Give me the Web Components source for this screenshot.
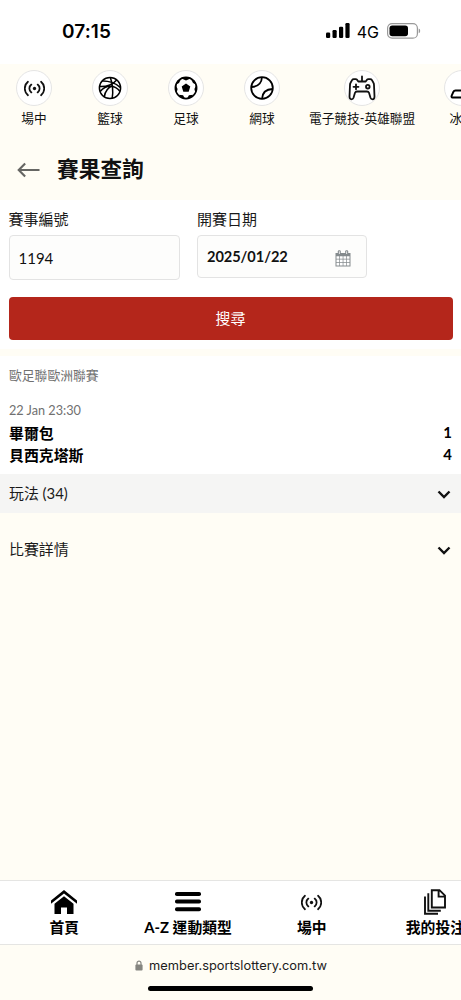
<!DOCTYPE html>
<html lang="zh-Hant">
<head>
<meta charset="utf-8">
<meta name="viewport" content="width=device-width">
<title>賽果查詢</title>
<style>
html,body{margin:0;height:100%;overflow:hidden;background:#fffdf5}
body{font-family:Lato,"Noto Sans CJK TC",sans-serif;color:#1a1a1a}
</style>
</head>
<body>
<results-page></results-page>
<script>
const define = (name, html) => customElements.define(name, class extends HTMLElement {
  constructor() {
    super();
    const t = document.createElement('template');
    t.innerHTML = html;
    this.attachShadow({ mode: 'open' }).append(t.content.cloneNode(true));
  }
});

const ICONS = {
  live: ['0 0 24 24', '<g fill="none" stroke="#111" stroke-width="2" stroke-linecap="round"><path d="M8.400 7.500a5.600 5.600 0 0 0 0 9M15.600 7.500a5.600 5.600 0 0 1 0 9M4.500 4.300a10 10 0 0 0 0 15.400M19.500 4.300a10 10 0 0 1 0 15.400"/></g><circle cx="12" cy="12" r="1.900" fill="#111"/>'],
  basketball: ['0 0 24 24', '<g fill="none" stroke="#000" stroke-width="1.5"><circle cx="12" cy="12" r="10.600"/><path d="M12.300 1.500C14.800 8 15.300 15 14.200 22.300M4 5C10 4.600 18 7 22.200 11.500M1.600 10.600C8 10.800 15 8.300 18.700 4M2.200 15.500C8 8.500 17 8.500 22 15.500M6.300 20.800C7 15.500 10 11.500 14.800 9.500"/></g>'],
  football: ['0 0 24 24', '<circle cx="12" cy="12" r="10.600" fill="none" stroke="#000" stroke-width="1.700"/><path d="M12 7.600l4.300 3-1.600 5.100H9.300l-1.600-5.100zM7 2.200l5 2.400 5-2.400-3-1.200h-4zM1.400 8.500l2.200 4.500-.9 3.500L.9 14zM22.600 8.500l-2.200 4.500.9 3.500L23.100 14zM2 8.500L5 6.900 7 3 3.500 4.600zM22 8.500L19 6.900 17 3l3.500 1.600zM4.800 18.800l4.300.5 2 3.700L7.500 22zM19.200 18.800l-4.300.5-2 3.700L16.500 22z" fill="#000"/>'],
  tennis: ['0 0 24 24', '<g fill="none" stroke="#000" stroke-width="1.800"><circle cx="12" cy="12" r="10.800"/><path d="M1.500 11C7.500 10.800 11.500 7.300 12 1.300M12 22.700C12.500 16.700 16.500 13.200 22.500 13"/></g>'],
  gamepad: ['0 0 28 26', '<g fill="none" stroke="#111" stroke-width="1.800" stroke-linecap="round" stroke-linejoin="round"><path d="M14 1.500v4.800M10.300 6.500h7.400l1.300-1.800q.5-.6 1.300-.6h2q1 0 1.500.8l1.500 2.600q.7 1 .7 2.500l.5 11.500q0 2.800-2 2.800-1.500 0-2-1.500L21 17.800q-.5-1.300-2-1.300H9q-1.500 0-2 1.300l-1.500 5Q5 24.300 3.500 24.300q-2 0-2-2.800L2 10q0-1.500.7-2.500l1.500-2.600q.5-.8 1.500-.8h2q.8 0 1.300.6z"/><path d="M8 9.300v5M5.500 11.800h5"/><circle cx="19.800" cy="11.700" r="1.800"/></g>'],
  hockey: ['0 0 24 24', '<path d="M8 14.500h20v7H2.500c-1 0-1.200-1-.8-2l1.600-3.500q.7-1.500 2.200-1.500z" fill="none" stroke="#000" stroke-width="1.900"/>'],
  back: ['0 0 24 16', '<path d="M23.500 8H2M8.500 1.200L1.800 8l6.700 6.800" fill="none" stroke="#666663" stroke-width="2.200"/>'],
  calendar: ['0 0 16 17', '<g fill="#858b8e"><path d="M.5 3h15v13.500H.5z"/><rect x="2.800" y=".2" width="3" height="4.800" rx="1.200"/><rect x="10.200" y=".2" width="3" height="4.800" rx="1.200"/></g><path d="M1.500 6.300h2.800v2.500H1.500zm3.500 0h2.700v2.500H5zm3.400 0h2.700v2.500H8.400zm3.400 0h2.700v2.500h-2.700zM1.500 9.500h2.800V12H1.500zm3.500 0h2.700V12H5zm3.400 0h2.700V12H8.400zm3.400 0h2.700V12h-2.700zM1.500 12.800h2.800v2.700H1.500zm3.500 0h2.700v2.700H5zm3.400 0h2.700v2.700H8.400zm3.400 0h2.700v2.700h-2.700zM3.900 1.300h.8v2.600h-.8zm7.400 0h.8v2.600h-.8z" fill="#fff"/>'],
  chevron: ['0 0 14 9', '<path d="M1.500 1.500L7 7l5.500-5.500" fill="none" stroke="#111" stroke-width="2.400"/>'],
  home: ['0 0 26 24', '<path d="M13 0l13 10.600v3.200L13 3.600 0 13.800v-3.200z"/><path d="M13 6.200l9.500 7.500V24H16v-6.500h-6V24H3.500V13.700z"/>'],
  menu: ['0 0 26 20', '<g><rect width="26" height="4" rx="1.800"/><rect y="7.600" width="26" height="4" rx="1.800"/><rect y="15.200" width="26" height="4" rx="1.800"/></g>'],
  docs: ['0 0 22 26', '<g fill="none" stroke="#111" stroke-width="1.900"><path d="M7.800 1.200h7.700l5.500 5.500v11.800H7.800zM14.600 1.200v6.400H21M4.300 4.200v17.500h12.500M1 7.500v17.300h13"/></g>'],
  lock: ['0 0 8 11', '<path d="M2 5V3.200a2 2 0 0 1 4 0V5" fill="none" stroke="#858580" stroke-width="1.200"/><rect x=".4" y="4.500" width="7.200" height="6" rx="1" fill="#858580"/>'],
  signal: ['0 0 24 16', '<rect y="9.500" width="4.200" height="5.500" rx="1.200"/><rect x="6.500" y="7" width="4.200" height="8" rx="1.200"/><rect x="13" y="3.800" width="4.200" height="11.200" rx="1.200"/><rect x="19.400" y="0" width="4.200" height="15" rx="1.200"/>'],
  battery: ['0 0 34 16', '<rect x=".6" y=".6" width="29.800" height="14.600" rx="4.500" fill="none" stroke="#999" stroke-width="1.200"/><rect x="2.500" y="2.500" width="18.500" height="10.800" rx="2.800"/><path d="M31.700 5.500q1.500.5 1.500 2.400t-1.500 2.400z" fill="#999"/>']
};
customElements.define('ui-icon', class extends HTMLElement {
  connectedCallback() {
    if (this.shadowRoot) return;
    const [box, art] = ICONS[this.getAttribute('name')];
    this.attachShadow({ mode: 'open' }).innerHTML =
      `<style>:host{display:block;flex:none;width:var(--w,24px);height:var(--h,24px)}svg{display:block;width:100%;height:100%}</style><svg viewBox="${box}">${art}</svg>`;
  }
});

define('status-bar', `<style>
:host{display:flex;box-sizing:border-box;height:64px;padding:0 40px 1px 62px;align-items:center;background:#fff;font-family:Inter,sans-serif;color:#000}
time{font-size:19px;font-weight:600;flex:1;letter-spacing:.1px}
span{font-size:16px;font-weight:400;margin:1px 8px 0 7px}
ui-icon{margin-top:-1px}
</style><time>07:15</time><ui-icon name="signal" style="--w:24px;--h:16px"></ui-icon><span>4G</span><ui-icon name="battery" style="--w:34px;--h:16px"></ui-icon>`);

define('sport-item', `<style>
:host{display:flex;flex:none;flex-direction:column;align-items:center;min-width:58px;color:#111}
div{box-sizing:border-box;width:36px;height:36px;border:1px solid #e5e5e5;border-radius:50%;background:#fff;display:flex;align-items:center;justify-content:center}
span{font-size:12.7px;line-height:19px;margin-top:3px;white-space:nowrap}
</style><div><slot name="icon"></slot></div><span><slot></slot></span>`);

define('sport-nav', `<style>
:host{display:flex;gap:18px;box-sizing:border-box;height:70px;padding:6px 0 0 5px;overflow:hidden}
</style><slot></slot>`);

define('page-title', `<style>
:host{display:flex;align-items:center;box-sizing:border-box;height:66px;padding:6px 17px 0;gap:17px}
h1{margin:0 0 2px;font-size:21.700px;line-height:30px;font-weight:700;color:#111}
ui-icon{margin-top:-1px}
</style><ui-icon name="back" style="--w:23px;--h:16px"></ui-icon><h1><slot></slot></h1>`);

define('form-field', `<style>
:host{display:block;width:var(--fw)}
label{display:block;font-size:15px;line-height:20px;margin:-1px 0 6px}
div{box-sizing:border-box;height:var(--fh);border:1px solid #e3e3e3;border-radius:4px;background:#fdfdfc;padding:0 15px 0 9px;display:flex;align-items:center;justify-content:space-between;font-size:15px;color:#111}
</style><label><slot name="label"></slot></label><div><slot></slot></div>`);

define('search-form', `<style>
:host{display:block;box-sizing:border-box;height:149px;padding:10px 8.500px 0;background:#fff}
section{display:flex;gap:17.500px;height:70px}
button{display:block;width:100%;height:43px;margin:17px 0 0;padding:0;border:0;border-radius:4px;background:#b4261b;color:#fff;font:15px/43px Lato,"Noto Sans CJK TC",sans-serif}
b{font-size:14.600px;font-weight:700;letter-spacing:-.06px}
ui-icon{margin-top:3px}
</style><section>
<form-field style="--fw:171px;--fh:45px"><span slot="label">賽事編號</span><span>1194</span></form-field>
<form-field style="--fw:170px;--fh:43px"><span slot="label">開賽日期</span><b>2025/01/22</b><ui-icon name="calendar" style="--w:16px;--h:17px"></ui-icon></form-field>
</section><button>搜尋</button>`);

define('match-card', `<style>
:host{display:block;box-sizing:border-box;height:118px;margin-top:7px;padding:9px 9px 0;background:#fff}
p{margin:0;font-size:12.800px;line-height:20px;color:#707070}
time{display:block;margin-top:17px;font-size:12.700px;line-height:17px;color:#707070}
div{display:flex;justify-content:space-between;font-size:14.900px;line-height:21.500px;font-weight:700;color:#000}
div:first-of-type{margin-top:4px}
div span+span{margin-top:-1px}
</style><p>歐足聯歐洲聯賽</p><time>22 Jan 23:30</time>
<div><span>畢爾包</span><span>1</span></div><div><span>貝西克塔斯</span><span>4</span></div>`);

define('accordion-row', `<style>
:host{display:flex;align-items:center;justify-content:space-between;box-sizing:border-box;height:39px;padding:0 10px 0 9px;font-size:14.900px}
:host([shaded]){background:#f5f5f4;margin-bottom:17px}
span{margin-top:-2px}
ui-icon{margin-top:2px}
</style><span><slot></slot></span><ui-icon name="chevron" style="--w:14px;--h:9px"></ui-icon>`);

define('tab-item', `<style>
:host{display:flex;flex:none;width:123.700px;flex-direction:column;align-items:center;font-size:14.800px;font-weight:700;line-height:20px;color:#000;white-space:nowrap}
div{height:28px;margin-bottom:1px;display:flex;align-items:center}
</style><div><slot name="icon"></slot></div><span><slot></slot></span>`);

define('tab-bar', `<style>
:host{display:flex;box-sizing:border-box;height:65px;border-top:1px solid #e5e5e3;border-bottom:1px solid #e5e5e3;background:#fff;padding:7px 0 0 2.500px;overflow:hidden}
</style><slot></slot>`);

define('browser-bar', `<style>
:host{display:flex;flex-direction:column;align-items:center;box-sizing:border-box;height:55px;padding-top:11px;font-family:Inter,sans-serif;color:#1b1b1b}
div{display:flex;align-items:center;gap:6px;height:19px;font-size:12.850px;padding-left:1px}
i{display:block;width:165px;height:5px;border-radius:3px;background:#000;margin-top:11px}
</style><div><ui-icon name="lock" style="--w:8px;--h:11px"></ui-icon><span>member.sportslottery.com.tw</span></div><i></i>`);

define('results-page', `<style>
:host{display:flex;flex-direction:column;height:1000px;overflow:hidden}
:host>*{flex:none}
main{flex:1!important}
</style>
<status-bar></status-bar>
<sport-nav>
<sport-item><ui-icon slot="icon" name="live" style="--w:21px;--h:21px"></ui-icon>場中</sport-item>
<sport-item><ui-icon slot="icon" name="basketball"></ui-icon>籃球</sport-item>
<sport-item><ui-icon slot="icon" name="football"></ui-icon>足球</sport-item>
<sport-item><ui-icon slot="icon" name="tennis"></ui-icon>網球</sport-item>
<sport-item><ui-icon slot="icon" name="gamepad" style="--w:28px;--h:26px"></ui-icon>電子競技-英雄聯盟</sport-item>
<sport-item><ui-icon slot="icon" name="hockey"></ui-icon>冰球</sport-item>
</sport-nav>
<page-title>賽果查詢</page-title>
<main><search-form></search-form><match-card></match-card>
<accordion-row shaded>玩法 (34)</accordion-row><accordion-row>比賽詳情</accordion-row></main>
<tab-bar>
<tab-item><ui-icon slot="icon" name="home" style="--w:26px;--h:24px"></ui-icon>首頁</tab-item>
<tab-item><ui-icon slot="icon" name="menu" style="--w:26px;--h:20px"></ui-icon>A-Z 運動類型</tab-item>
<tab-item><ui-icon slot="icon" name="live" style="--w:21px;--h:21px"></ui-icon>場中</tab-item>
<tab-item><ui-icon slot="icon" name="docs" style="--w:22px;--h:26px"></ui-icon>我的投注</tab-item>
</tab-bar>
<browser-bar></browser-bar>`);
</script>
</body>
</html>
